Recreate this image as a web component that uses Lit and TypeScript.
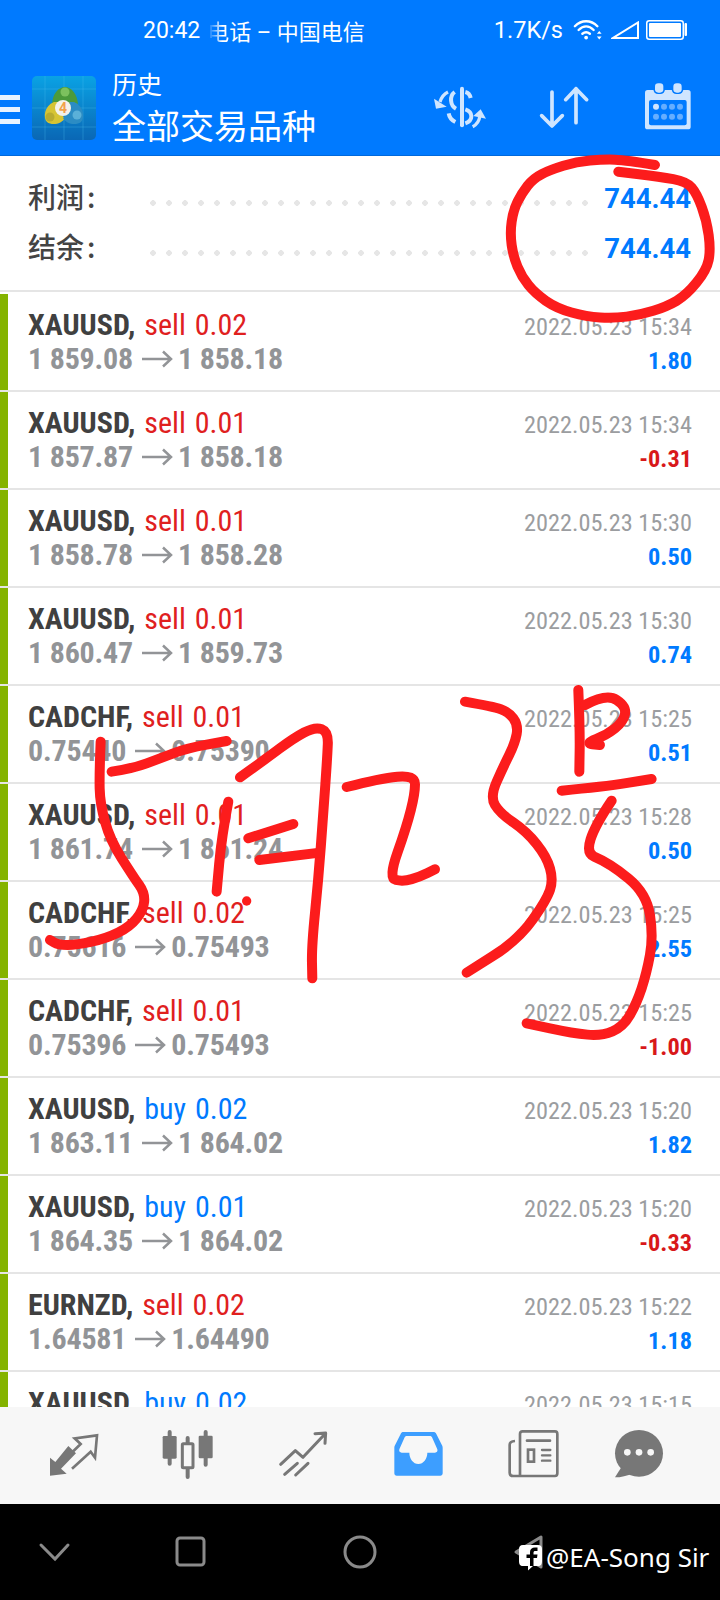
import { LitElement, html, css, svg } from 'lit';
import { customElement } from 'lit/decorators.js';

type Trade = [string, 'sell' | 'buy', string, string, string, string, string];

const TRADES: Trade[] = [
  ['XAUUSD', 'sell', '0.02', '1 859.08', '1 858.18', '15:34', '1.80'],
  ['XAUUSD', 'sell', '0.01', '1 857.87', '1 858.18', '15:34', '-0.31'],
  ['XAUUSD', 'sell', '0.01', '1 858.78', '1 858.28', '15:30', '0.50'],
  ['XAUUSD', 'sell', '0.01', '1 860.47', '1 859.73', '15:30', '0.74'],
  ['CADCHF', 'sell', '0.01', '0.75440', '0.75390', '15:25', '0.51'],
  ['XAUUSD', 'sell', '0.01', '1 861.74', '1 861.24', '15:28', '0.50'],
  ['CADCHF', 'sell', '0.02', '0.75616', '0.75493', '15:25', '2.55'],
  ['CADCHF', 'sell', '0.01', '0.75396', '0.75493', '15:25', '-1.00'],
  ['XAUUSD', 'buy', '0.02', '1 863.11', '1 864.02', '15:20', '1.82'],
  ['XAUUSD', 'buy', '0.01', '1 864.35', '1 864.02', '15:20', '-0.33'],
  ['EURNZD', 'sell', '0.02', '1.64581', '1.64490', '15:22', '1.18'],
  ['XAUUSD', 'buy', '0.02', '1 865.20', '1 866.11', '15:15', '1.82'],
];

// smooth line through traced points: quadratic segments between midpoints
function smooth(pts: number[][]): string {
  let d = `M${pts[0][0]} ${pts[0][1]}`;
  for (let i = 1; i < pts.length - 1; i++) {
    const mx = (pts[i][0] + pts[i + 1][0]) / 2;
    const my = (pts[i][1] + pts[i + 1][1]) / 2;
    d += ` Q${pts[i][0]} ${pts[i][1]} ${mx} ${my}`;
  }
  const last = pts[pts.length - 1];
  return `${d} L${last[0]} ${last[1]}`;
}

// handwriting, traced in 3x crop coordinates
const CIRCLE = [[525, 45], [440, 30], [370, 28], [290, 35], [210, 60], [160, 85], [125, 130], [100, 180], [90, 250], [100, 320], [125, 380], [165, 430], [230, 475], [320, 500], [400, 505], [480, 495], [560, 470], [620, 435], [680, 360], [692, 300], [680, 210], [650, 130], [620, 95], [540, 80], [415, 65]];
const LEFT_STROKES = [
  [[335, 275], [400, 265], [480, 235], [560, 205], [680, 183]],
  [[302, 185], [298, 280], [300, 370], [330, 480], [400, 590], [435, 640], [430, 690], [390, 740], [320, 775], [230, 795], [175, 795], [150, 780]],
  [[685, 365], [665, 470], [650, 635]],
  [[720, 292], [800, 235], [880, 175], [945, 140], [985, 155], [982, 230], [970, 400], [955, 600], [935, 800], [937, 895]],
  [[745, 475], [880, 432]],
  [[778, 540], [960, 518]],
];
const RIGHT_STROKES = [
  [[-40, 321], [60, 295], [165, 285], [165, 340], [140, 440], [85, 595], [130, 605], [180, 590], [225, 568]],
  [[315, 65], [400, 80], [445, 95], [475, 135], [465, 190], [430, 260], [390, 350], [420, 400], [500, 455], [560, 530], [580, 600], [560, 660], [475, 780], [320, 878]],
  [[655, 30], [660, 150], [658, 275]],
  [[675, 75], [740, 40], [800, 80], [790, 125], [740, 165], [675, 190], [720, 195]],
  [[605, 332], [730, 320], [875, 297]],
  [[755, 362], [655, 510], [750, 550], [860, 640], [880, 770], [860, 880], [830, 970], [790, 1040], [725, 1068], [640, 1060], [500, 1030]],
];

const ink = (pts: number[][]) => svg`<path d=${smooth(pts)} />`;

@customElement('app-root')
export class AppRoot extends LitElement {
  static styles = css`
    :host {
      display: block;
      position: relative;
      width: 720px;
      height: 1600px;
      overflow: hidden;
      background: #fff;
      font-family: Roboto, 'Noto Sans CJK SC', sans-serif;
    }
    .page { display: flex; flex-direction: column; height: 100%; }

    .head { background: #007aff; color: #fff; height: 156px; flex: none; box-shadow: inset 0 -1px 0 #0069dc; }
    .status { display: flex; align-items: center; height: 60px; padding: 0 33px 0 143px; font-size: 23px; }
    .carrier { margin-left: 7px; font-size: 22px; }
    .carrier .fade { -webkit-mask-image: linear-gradient(90deg, transparent 5%, #fff 70%); mask-image: linear-gradient(90deg, transparent 5%, #fff 70%); }
    .speed { margin-left: auto; font-size: 23.500px; }
    .status svg { display: block; margin-left: 10px; }

    .toolbar { display: flex; align-items: center; height: 96px; padding-right: 22px; }
    .burger { width: 20px; height: 29px; margin-top: 3px; display: flex; flex-direction: column; justify-content: space-between; }
    .burger i { display: block; height: 5px; background: #e8f3ff; }
    .logo { display: block; margin-left: 12px; }
    .title { margin: 0 0 3px 16px; flex: 1; font-family: 'Noto Sans CJK SC', sans-serif; }
    .title div:first-child { font-size: 25px; line-height: 34px; margin-bottom: 3px; }
    .title div:last-child { font-size: 34px; line-height: 44px; }
    .tools { display: flex; gap: 44px; }
    .tools svg { display: block; }

    .summary { flex: none; height: 136px; padding: 17px 29px 0 28px; box-sizing: border-box; border-bottom: 2px solid #e5e5e5; }
    .sum-row { display: flex; align-items: center; height: 50px; }
    .sum-label { width: 122px; margin-bottom: 4px; font-size: 28px; font-weight: 500; color: #444; font-family: 'Noto Sans CJK SC', sans-serif; white-space: nowrap; }
    .sum-label span { margin-left: 3px; }
    .dots { flex: 1; height: 6px; margin-top: 10px; background-image: radial-gradient(circle at 3px 3px, #e6e6e6 2.600px, transparent 3px); background-size: 16px 6px; background-repeat: repeat-x; }
    .sum-value { margin-left: 14px; font-size: 27.500px; font-weight: 700; color: #007aff; }

    .list { flex: 1; min-height: 0; overflow: hidden; padding-top: 2px; }
    .row { display: flex; height: 98px; box-sizing: border-box; border-bottom: 2px solid #e5e5e5; }
    .bar { width: 8px; background: #84b300; flex: none; }
    .cell { flex: 1; display: flex; justify-content: space-between; padding: 13px 28px 0 20px; }
    .cell > div { white-space: nowrap; }
    .left { font-size: 30px; font-stretch: 75%; line-height: 35px; word-spacing: 2px; }
    .sym { font-weight: 700; color: #404040; }
    .sell { color: #e0201e; }
    .buy { color: #007aff; }
    .price { margin-top: -1px; font-weight: 700; color: #929497; display: flex; align-items: center; letter-spacing: -0.200px; word-spacing: 0; }
    .price svg { margin: 0 5px 0 9px; }
    .right { text-align: right; font-size: 24.300px; font-stretch: 75%; line-height: 35px; color: #9b9da0; padding-top: 2px; }
    .val { margin-top: -1px; font-weight: 700; color: #007aff; }
    .val.neg { color: #d8181a; }

    .nav { flex: none; height: 97px; background: #f7f7f7; display: flex; padding: 21px 0 0 47px; box-sizing: border-box; gap: 63px; }
    .nav svg { display: block; }
    .nav svg:last-child { margin-left: -9px; }

    .sys { flex: none; height: 96px; background: #000; }
    .sys svg { display: block; }
    .mark { position: absolute; left: 518px; top: 1537px; display: flex; align-items: center; gap: 3px; color: #fff; font-size: 26px; font-family: 'Noto Sans', sans-serif; line-height: 40px; white-space: nowrap; }
    .mark svg { display: block; flex: none; }

    .ink { position: absolute; left: 0; top: 0; pointer-events: none; }
  `;

  private logo() {
    return svg`<svg class="logo" width="64" height="64" viewBox="0 0 64 64">
      <defs><linearGradient id="lg" x1="0" y1="0" x2="0" y2="1"><stop offset="0" stop-color="#0aa2e4" /><stop offset="1" stop-color="#0a67b5" /></linearGradient></defs>
      <rect width="64" height="64" rx="5" fill="url(#lg)" />
      <path d="M13 0V64M32 0V64M51 0V64M0 13H64M0 32H64M0 51H64" stroke="#4fc0ee" stroke-opacity=".3" />
      <path d="M20 30C20 17 27 11 33 11S46 18 46 30C40 29 26 29 20 30Z" fill="#4b9a3b" />
      <circle cx="33" cy="16" r="4.500" fill="#7cc15e" />
      <path d="M22 26C12 30 11 42 15 46C20 50 30 48 33 42C28 38 26 34 26 26Z" fill="#d6c434" />
      <circle cx="18" cy="41" r="4.500" fill="#b8ab30" />
      <path d="M42 26C52 30 53 42 49 46C44 50 34 48 31 42C36 38 38 34 38 26Z" fill="#2b8cc4" />
      <circle cx="45" cy="39" r="4.500" fill="#5ab0d8" />
      <circle cx="31" cy="32" r="8" fill="#f4f1ea" />
      <text x="31" y="37" text-anchor="middle" font-size="14" font-weight="700" font-family="Roboto" fill="#f2a14a">4</text>
    </svg>`;
  }

  private toolIcons() {
    return html`<div class="tools">
      <svg width="60" height="64" viewBox="0 0 180 192" fill="none" stroke="#cfe5ff" stroke-width="12">
        <path d="M96 38V148" stroke-linecap="round" />
        <path d="M74 48C58 60 60 88 78 98" />
        <path d="M106 48C114 50 120 56 122 66" />
        <path d="M106 100C130 108 130 134 106 142" />
        <path d="M56 112C58 124 64 132 76 138" />
        <path d="M30 78C34 64 42 54 54 48" stroke-width="10" />
        <path d="M12 68L50 92L18 98Z" fill="#cfe5ff" stroke="none" />
        <path d="M150 118C148 134 140 146 128 152" stroke-width="10" />
        <path d="M130 120L152 100L168 128Z" fill="#cfe5ff" stroke="none" />
      </svg>
      <svg width="60" height="64" viewBox="312 0 180 192" fill="none" stroke="#cfe5ff" stroke-width="11" stroke-linecap="round" stroke-linejoin="round">
        <path d="M366 48V150M335 119L366 150L397 119" />
        <path d="M438 38V140M407 71L438 38L470 71" />
      </svg>
      <svg width="60" height="64" viewBox="624 0 180 192">
        <rect x="645" y="42" width="137" height="118" rx="8" fill="#cfe5ff" />
        <rect x="657" y="72" width="113" height="76" rx="6" fill="#007aff" />
        <rect x="670" y="18" width="35" height="36" rx="14" fill="#007aff" />
        <rect x="725" y="18" width="35" height="36" rx="14" fill="#007aff" />
        <rect x="675" y="22" width="25" height="28" rx="10" fill="#cfe5ff" />
        <rect x="730" y="22" width="25" height="28" rx="10" fill="#cfe5ff" />
        <circle cx="678" cy="92" r="9" fill="#cfe5ff" />
        ${[702, 726, 750].map((x) => svg`<circle cx=${x} cy="92" r="9" fill="#66aeff" />`)}
        ${[678, 702, 726, 750].map((x) => svg`<circle cx=${x} cy="122" r="9" fill="#66aeff" />`)}
      </svg>
    </div>`;
  }

  private navIcons() {
    const g = '#777';
    return html`<div class="nav">
      <svg width="52" height="52" viewBox="21 24 156 156">
        <path d="M30 113V167L80 161L63 146L108 100L85 78L46 126Z" fill=${g} />
        <path d="M96 146L152 95L165 113L171 46L104 55L122 72L92 101" fill="none" stroke=${g} stroke-width="8" />
      </svg>
      <svg width="52" height="52" viewBox="369 24 156 156" fill=${g}>
        <path d="M392 36V131M500 36V134M446 54V171" stroke=${g} stroke-width="12" stroke-linecap="round" />
        <rect x="371" y="48" width="42" height="68" rx="4" />
        <rect x="479" y="47" width="42" height="68" rx="4" />
        <rect x="430" y="71" width="32" height="72" rx="3" fill="#f7f7f7" stroke=${g} stroke-width="9" />
      </svg>
      <svg width="52" height="52" viewBox="712 24 156 156" fill="none" stroke=${g} stroke-width="9" stroke-linecap="round" stroke-linejoin="round">
        <path d="M723 133L767 92L790 112L853 45M826 41L858 39L856 70" />
        <path d="M735 163L773 130M768 165L805 130" />
      </svg>
      <svg width="52" height="52" viewBox="36 24 156 156">
        <path d="M70 36H160C164 36 167 38 169 42L186 76C187 78 188 80 188 84V160C188 164 185 167 181 167H50C46 167 43 164 43 160V84C43 80 44 78 45 76L62 42C64 38 66 36 70 36Z" fill="#3d9eff" />
        <path d="M80 48H150C153 48 155 50 156 52L172 88C174 94 170 98 165 98H142C142 116 130 132 115 132S88 116 88 98H65C60 98 56 94 58 88L74 52C75 50 77 48 80 48Z" fill="#f7f7f7" />
      </svg>
      <svg width="52" height="52" viewBox="381 24 156 156" fill="none" stroke=${g} stroke-width="8">
        <path d="M420 168V42C420 37 423 34 428 34H525C529 34 532 37 532 42V160C532 165 529 168 525 168H400C393 168 389 164 389 158V74C389 68 393 64 405 63" stroke-linejoin="round" />
        <path d="M441 62H510" stroke-linecap="round" />
        <rect x="444" y="89" width="18" height="36" />
        <path d="M486 90H511M486 106H511M486 122H511" stroke-linecap="round" stroke-width="7" />
      </svg>
      <svg width="52" height="52" viewBox="699 24 156 156">
        <ellipse cx="777" cy="100" rx="72" ry="70" fill=${g} />
        <path d="M725 140L705 172C722 172 742 168 760 158Z" fill=${g} />
        ${[742, 777, 812].map((x) => svg`<circle cx=${x} cy="97" r="10" fill="#f7f7f7" />`)}
      </svg>
    </div>`;
  }

  render() {
    return html`
      <div class="page">
        <div class="head">
          <div class="status">
            <span>20:42</span>
            <span class="carrier"><span class="fade">电</span>话 – 中国电信</span>
            <span class="speed">1.7K/s</span>
            <svg width="30" height="22" viewBox="0 0 32 22" fill="none" stroke="#fff" stroke-width="2.600" stroke-linecap="round">
              <path d="M2 7C9 0 19 0 26 7M6 11C11 6 17 6 22 11M10 15C12.500 13 15.500 13 18 15" />
              <circle cx="14" cy="19" r="2" fill="#fff" stroke="none" />
              <path d="M28 12L30.500 15H25.500ZM28 21L30.500 18H25.500Z" fill="#fff" stroke="none" />
            </svg>
            <svg style="margin-left:8px" width="28" height="18" viewBox="0 0 28 18" fill="none" stroke="#fff" stroke-width="2"><path d="M2 17H27V1.500Z" stroke-linejoin="miter" /></svg>
            <svg style="margin-left:7px" width="41" height="20" viewBox="0 0 41 20">
              <rect x=".75" y=".75" width="36.500" height="18.500" rx="2.500" fill="none" stroke="#fff" stroke-width="1.500" />
              <rect x="3" y="3" width="32" height="14" rx="1" fill="#fff" />
              <rect x="38.500" y="3" width="2.500" height="13" rx="1" fill="#fff" />
            </svg>
          </div>
          <div class="toolbar">
            <div class="burger"><i></i><i></i><i></i></div>
            ${this.logo()}
            <div class="title"><div>历史</div><div>全部交易品种</div></div>
            ${this.toolIcons()}
          </div>
        </div>

        <div class="summary">
          <div class="sum-row"><span class="sum-label">利润<span>:</span></span><span class="dots"></span><span class="sum-value">744.44</span></div>
          <div class="sum-row"><span class="sum-label">结余<span>:</span></span><span class="dots"></span><span class="sum-value">744.44</span></div>
        </div>

        <div class="list">
          ${TRADES.map(
            (t) => html`<div class="row">
              <div class="bar"></div>
              <div class="cell">
                <div class="left">
                  <div><span class="sym">${t[0]},</span> <span class=${t[1]}>${t[1]} ${t[2]}</span></div>
                  <div class="price">
                    <span>${t[3]}</span>
                    <svg width="31" height="18" viewBox="0 0 31 18" fill="none" stroke="#929497" stroke-width="2.500"><path d="M0 9H29M21 1.500L29 9L21 16.500" /></svg>
                    <span>${t[4]}</span>
                  </div>
                </div>
                <div class="right">
                  <div>2022.05.23 ${t[5]}</div>
                  <div class="val ${t[6].startsWith('-') ? 'neg' : ''}">${t[6]}</div>
                </div>
              </div>
            </div>`,
          )}
        </div>

        ${this.navIcons()}

        <div class="sys">
          <svg width="720" height="96" viewBox="0 0 720 96" fill="none" stroke="#8a8a8a" stroke-width="3">
            <path d="M41 41L55 55L68 41" stroke-linecap="round" />
            <rect x="177" y="34" width="27" height="27" rx="3" />
            <circle cx="360" cy="48" r="15" />
            <path d="M541 33V63L516 48Z" stroke-linejoin="round" />
          </svg>
        </div>
      </div>

      <div class="mark">
        <svg width="25" height="27" viewBox="0 0 25 27">
          <path d="M5 1H20C23 1 24 3 24 5V17C24 20 23 22 20 22H15L10 26.500V22H5C2 22 1 20 1 17V5C1 3 2 1 5 1Z" fill="#fff" />
          <path d="M12 22V14H8.500V10.500H12V8C12 5 14 3.500 17 3.500H19.500V7H17.500C16 7 15.500 7.500 15.500 9V10.500H19.500L19 14H15.500V22Z" fill="#000" />
        </svg>
        <span>@EA-Song Sir</span>
      </div>

      <svg class="ink" width="720" height="1600" viewBox="0 0 720 1600" fill="none" stroke="#fc1c1c" stroke-linecap="round" stroke-linejoin="round">
        <g transform="translate(480 150) scale(.3333)" stroke-width="30">${ink(CIRCLE)}</g>
        <g transform="translate(0 680) scale(.3333)" stroke-width="30">
          ${LEFT_STROKES.map(ink)}
          <circle cx="740" cy="663" r="14" fill="#fc1c1c" stroke="none" />
        </g>
        <g transform="translate(360 680) scale(.3333)" stroke-width="30">${RIGHT_STROKES.map(ink)}</g>
      </svg>
    `;
  }
}
